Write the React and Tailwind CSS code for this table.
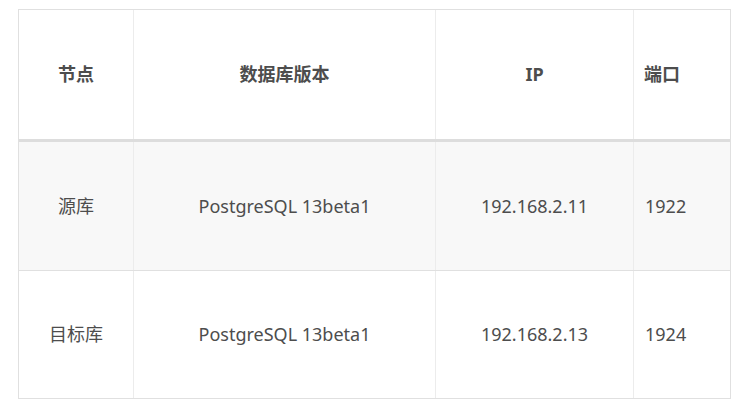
import React from 'react';

const rows = [
  { node: '源库', version: 'PostgreSQL 13beta1', ip: '192.168.2.11', port: '1922', bg: 'bg-[#f8f8f8]' },
  { node: '目标库', version: 'PostgreSQL 13beta1', ip: '192.168.2.13', port: '1924', bg: 'bg-white' },
];

const App = () => {
  return (
    <div className="min-h-screen bg-white pt-[9px] pl-[18px] text-[18px] text-[#4d4d4d] font-['Noto_Sans','Noto_Sans_CJK_SC',sans-serif]">
      <div className="w-[713px] border border-[#e0e0e0]">
        <div className="flex h-[132px] border-b-[3px] border-[#dddddd] font-bold">
          <div className="w-[115px] flex items-center justify-center border-r border-[#ececec]">节点</div>
          <div className="w-[302px] flex items-center justify-center border-r border-[#ececec]">数据库版本</div>
          <div className="w-[198px] flex items-center justify-center border-r border-[#ececec]">IP</div>
          <div className="w-[96px] flex items-center pl-[10px]">端口</div>
        </div>
        {rows.map((r, i) => (
          <div
            key={r.node}
            className={`flex ${i === 0 ? 'h-[129px] border-b border-[#e0e0e0]' : 'h-[127px]'} ${r.bg}`}
          >
            <div className="w-[115px] flex items-center justify-center border-r border-[#ececec]">{r.node}</div>
            <div className="w-[302px] flex items-center justify-center border-r border-[#ececec]">{r.version}</div>
            <div className="w-[198px] flex items-center justify-center border-r border-[#ececec]">{r.ip}</div>
            <div className="w-[96px] flex items-center pl-[11px]">{r.port}</div>
          </div>
        ))}
      </div>
    </div>
  );
};

export default App;
